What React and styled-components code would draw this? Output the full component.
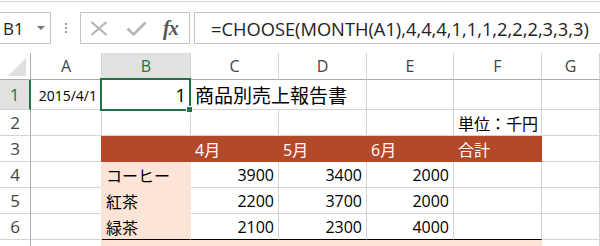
import styled, { createGlobalStyle } from "styled-components";

const GRID = "#d4d4d4";
const HEAD_LINE = "#ababab";
const GREEN = "#217346";
const BRICK = "#b4492a";
const PEACH = "#fce4d6";
const CELL_FONT = `"Open Sans", "Noto Sans CJK JP", sans-serif`;

const GlobalStyle = createGlobalStyle`
    html, body {
        margin: 0;
        padding: 0;
        background: #fff;
        overflow: hidden;
    }
    body {
        font-family: ${CELL_FONT};
    }
`;

const Window = styled.div`
    width: 600px;
    height: 246px;
    overflow: hidden;
    background: #fff;
`;

const FormulaBar = styled.div`
    display: flex;
    align-items: flex-start;
    box-sizing: border-box;
    height: 52px;
    margin-top: 1px;
    padding-top: 10px;
    border-top: 1px solid #d8d8d8;
`;

const Box = styled.div`
    box-sizing: border-box;
    height: 32px;
    border: 1px solid #c6c6c6;
    background: #fff;
    display: flex;
    align-items: center;
`;

const NameBox = styled(Box)`
    width: 52px;
    margin-left: -1px;
    padding-left: 3px;
    justify-content: space-between;
    font-size: 17px;
    color: #222;
`;

const DropArrow = styled.span`
    width: 0;
    height: 0;
    margin-right: 5px;
    border-left: 4px solid transparent;
    border-right: 4px solid transparent;
    border-top: 4px solid #777;
`;

const Grip = styled.div`
    display: flex;
    flex-direction: column;
    gap: 2px;
    margin: 11px 13px 0 14px;

    span {
        width: 2px;
        height: 2px;
        background: #9a9a9a;
    }
`;

const ButtonBox = styled(Box)`
    width: 110px;
    padding-left: 9px;
`;

const IconSlot = styled.span`
    display: flex;
    align-items: center;
    justify-content: center;
    width: ${(p) => p.$w}px;
    margin-right: ${(p) => p.$gap || 0}px;
`;

const Fx = styled.span`
    font-family: "Liberation Serif", "DejaVu Serif", serif;
    font-style: italic;
    font-weight: bold;
    font-size: 20px;
    color: #555;
    letter-spacing: -1px;
`;

const FormulaBox = styled(Box)`
    flex: 1;
    margin-left: 4px;
    margin-right: -4px;
    padding-left: 16px;
    font-size: 18.3px;
    color: #222;
    white-space: nowrap;
`;

const Sheet = styled.div`
    display: grid;
    grid-template-columns: 31px 71px 89px 88px 88px 87px 88px 1fr;
    grid-template-rows: 27px 30px repeat(5, 26px) 26px;
`;

const Corner = styled.div`
    box-sizing: border-box;
    display: flex;
    align-items: flex-end;
    justify-content: flex-end;
    padding: 0 4px 3px 0;
    border-right: 1px solid ${HEAD_LINE};
    border-bottom: 1px solid ${HEAD_LINE};

    span {
        width: 18px;
        height: 18px;
        background: #dfdfdf;
        clip-path: polygon(100% 0, 100% 100%, 0 100%);
    }
`;

const ColHead = styled.div`
    box-sizing: border-box;
    display: flex;
    align-items: center;
    justify-content: center;
    font-size: 16px;
    color: ${(p) => (p.$active ? GREEN : "#444")};
    background: ${(p) => (p.$active ? "#e1e1e1" : "#fff")};
    border-right: 1px solid ${GRID};
    border-bottom: ${(p) => (p.$active ? `2px solid ${GREEN}` : `1px solid ${HEAD_LINE}`)};
`;

const RowHead = styled.div`
    box-sizing: border-box;
    display: flex;
    align-items: center;
    justify-content: center;
    font-size: 17px;
    color: ${(p) => (p.$active ? GREEN : "#444")};
    background: ${(p) => (p.$active ? "#e1e1e1" : "#fff")};
    border-bottom: 1px solid ${GRID};
    border-right: ${(p) => (p.$active ? `2px solid ${GREEN}` : `1px solid ${HEAD_LINE}`)};
`;

const Cell = styled.div`
    position: relative;
    box-sizing: border-box;
    display: flex;
    align-items: center;
    justify-content: ${(p) => (p.$right ? "flex-end" : "flex-start")};
    grid-column: span ${(p) => p.$span || 1};
    padding: 1px 4px 0 4px;
    font-size: ${(p) => p.$size || 16}px;
    color: ${(p) => p.$color || "#000"};
    white-space: nowrap;
    background: ${(p) => p.$fill || "transparent"};
    border-right: 1px solid ${(p) => p.$fill || GRID};
    border-bottom: 1px solid ${(p) => p.$under || p.$fill || GRID};
    ${(p) => p.$fill && `z-index: 1; box-shadow: -1px 0 0 0 ${p.$fill};`}
`;

const Selection = styled.div`
    position: absolute;
    top: -2px;
    left: -2px;
    right: -1px;
    bottom: -2px;
    border: 2px solid ${GREEN};
    z-index: 3;
    pointer-events: none;

    &::after {
        content: "";
        position: absolute;
        right: -4px;
        bottom: -4px;
        width: 5px;
        height: 5px;
        background: ${GREEN};
        border: 1px solid #fff;
    }
`;

const CloseIcon = () => (
    <svg width="18" height="15" viewBox="0 0 18 15">
        <path d="M1.5 1 L16.5 14 M16.5 1 L1.5 14" stroke="#b4b4b4" strokeWidth="2.2" fill="none" />
    </svg>
);

const CheckIcon = () => (
    <svg width="21" height="15" viewBox="0 0 21 15">
        <path d="M1.5 7.5 L7.5 13.5 L19.5 1.5" stroke="#b4b4b4" strokeWidth="2.6" fill="none" />
    </svg>
);

const months = ["4月", "5月", "6月", "合計"];

const rows = [
    { num: 4, name: "コーヒー", values: [3900, 3400, 2000] },
    { num: 5, name: "紅茶", values: [2200, 3700, 2000] },
    { num: 6, name: "緑茶", values: [2100, 2300, 4000] },
];

export default function App() {
    return (
        <Window>
            <GlobalStyle />
            <FormulaBar>
                <NameBox>
                    B1
                    <DropArrow />
                </NameBox>
                <Grip>
                    <span />
                    <span />
                    <span />
                </Grip>
                <ButtonBox>
                    <IconSlot $w={18} $gap={18}>
                        <CloseIcon />
                    </IconSlot>
                    <IconSlot $w={21} $gap={16}>
                        <CheckIcon />
                    </IconSlot>
                    <Fx>fx</Fx>
                </ButtonBox>
                <FormulaBox>=CHOOSE(MONTH(A1),4,4,4,1,1,1,2,2,2,3,3,3)</FormulaBox>
            </FormulaBar>

            <Sheet>
                <Corner>
                    <span />
                </Corner>
                {["A", "B", "C", "D", "E", "F", "G"].map((c) => (
                    <ColHead key={c} $active={c === "B"}>
                        {c}
                    </ColHead>
                ))}

                <RowHead $active>1</RowHead>
                <Cell $right $size={14}>2015/4/1</Cell>
                <Cell $right $size={19}>
                    1
                    <Selection />
                </Cell>
                <Cell $span={2} $size={19}>商品別売上報告書</Cell>
                <Cell />
                <Cell />
                <Cell />

                <RowHead>2</RowHead>
                <Cell />
                <Cell />
                <Cell />
                <Cell />
                <Cell />
                <Cell>単位：千円</Cell>
                <Cell />

                <RowHead>3</RowHead>
                <Cell />
                <Cell $fill={BRICK} />
                {months.map((m) => (
                    <Cell key={m} $fill={BRICK} $color="#fff">
                        {m}
                    </Cell>
                ))}
                <Cell />

                {rows.map((r, i) => {
                    const under = i === rows.length - 1 ? "#000" : undefined;
                    return [
                        <RowHead key={`h${r.num}`}>{r.num}</RowHead>,
                        <Cell key={`a${r.num}`} />,
                        <Cell key={`b${r.num}`} $fill={PEACH} $under={under}>
                            {r.name}
                        </Cell>,
                        ...r.values.map((v, j) => (
                            <Cell key={`v${r.num}-${j}`} $right $under={under}>
                                {v}
                            </Cell>
                        )),
                        <Cell key={`t${r.num}`} $under={under} />,
                        <Cell key={`g${r.num}`} />,
                    ];
                })}

                <RowHead>7</RowHead>
                <Cell />
                {[0, 1, 2, 3, 4].map((k) => (
                    <Cell key={`p${k}`} $fill={PEACH} />
                ))}
                <Cell />
            </Sheet>
        </Window>
    );
}
